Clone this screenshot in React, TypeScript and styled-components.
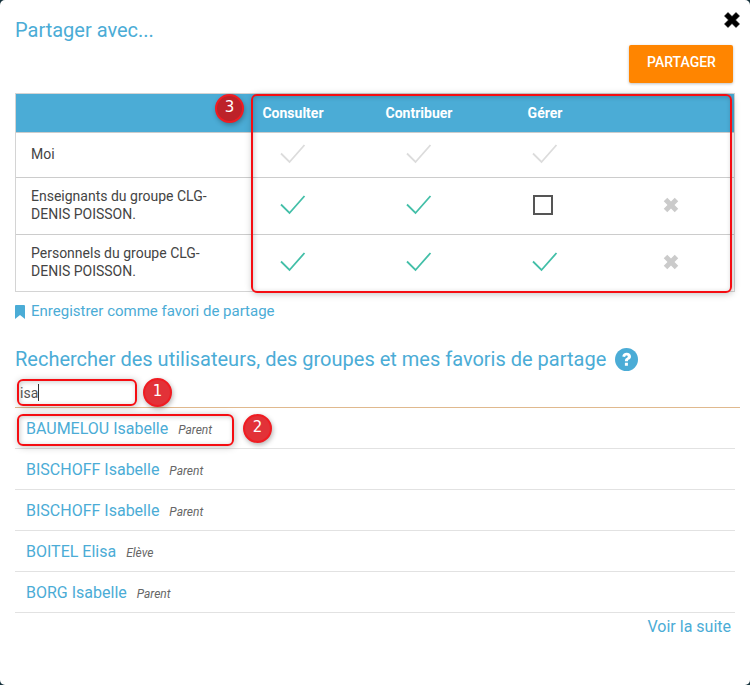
import React from "react";
import styled, { createGlobalStyle } from "styled-components";

const Global = createGlobalStyle`
  html, body { margin: 0; padding: 0; background: #16323c; }
  body { width: 750px; height: 685px; overflow: hidden; font-family: Roboto, "Liberation Sans", sans-serif; }
  * { box-sizing: border-box; }
`;

const BLUE = "#4bacd6";

const Modal = styled.div`
  position: relative;
  width: 750px;
  height: 685px;
  background: #fff;
  border-radius: 5px;
  padding: 19px 10px 0 15px;
`;
const Close = styled.button`
  position: absolute;
  top: 12px;
  right: 10px;
  width: 16px;
  height: 16px;
  padding: 0;
  border: 0;
  background: none;
  display: flex;
`;
const Title = styled.h2`
  margin: 0;
  font-size: 20px;
  line-height: 23px;
  font-weight: 400;
  color: ${BLUE};
`;
const Actions = styled.div`
  display: flex;
  justify-content: flex-end;
  padding-right: 7px;
  margin-top: 3px;
`;
const ShareButton = styled.button`
  width: 104px;
  height: 38px;
  border: 0;
  border-radius: 2px;
  background: #ff8500;
  color: #fff;
  font: 500 14px Roboto, sans-serif;
  padding: 0 0 4px 1px;
  box-shadow: 0 1px 3px rgba(0, 0, 0, 0.25);
`;
const Table = styled.div`
  width: 720px;
  margin-top: 10px;
  border: 1px solid #d4d4d4;
  display: grid;
  grid-template-columns: 214px repeat(4, 126px);
  grid-template-rows: 39px 45px 57px 56px;
`;
const HeadCell = styled.div`
  background: ${BLUE};
  color: #fff;
  font-size: 14px;
  font-weight: 700;
  display: flex;
  align-items: center;
  justify-content: center;
  padding: 0 0 1px;
  border-bottom: 1px solid #ccc;
`;
const LabelCell = styled.div<{ $last?: boolean }>`
  display: flex;
  align-items: center;
  padding: 0 15px 2px;
  font-size: 14px;
  line-height: 18px;
  color: #444;
  white-space: pre-line;
  border-bottom: ${(p) => (p.$last ? "0" : "1px solid #ccc")};
`;
const IconCell = styled.div<{ $last?: boolean; $shift?: number }>`
  display: flex;
  align-items: center;
  justify-content: center;
  padding: 0 ${(p) => (p.$shift ? 4 : 0)}px 2px 0;
  border-bottom: ${(p) => (p.$last ? "0" : "1px solid #ccc")};
`;
const FavLink = styled.a`
  display: flex;
  align-items: center;
  gap: 6px;
  margin-top: 11px;
  font-size: 15px;
  line-height: 17px;
  color: ${BLUE};
`;
const SearchTitle = styled.h2`
  display: flex;
  align-items: center;
  gap: 9px;
  margin: 26px 0 0;
  font-size: 20px;
  line-height: 26px;
  font-weight: 400;
  color: ${BLUE};
`;
const SearchBox = styled.div`
  height: 30px;
  margin-top: 6px;
  border-bottom: 1px solid #e0b98e;
  width: 725px;
  padding: 6px 0 0 5px;
  font-size: 14px;
  line-height: 18px;
  color: #555;
  display: flex;
  align-items: flex-start;
`;
const Caret = styled.span`
  width: 1px;
  height: 17px;
  background: #333;
`;
const List = styled.ul`
  list-style: none;
  margin: 0;
  padding: 0;
  width: 720px;
`;
const Row = styled.li`
  height: 41px;
  display: flex;
  align-items: center;
  padding: 0 0 0 11px;
  border-bottom: 1px solid #e2e2e2;
`;
const Name = styled.span`
  font-size: 16px;
  color: ${BLUE};
`;
const Role = styled.span`
  margin-left: 10px;
  font-size: 12px;
  font-style: italic;
  color: #666;
  padding-top: 4px;
`;
const More = styled.a`
  display: block;
  width: 716px;
  margin-top: 4px;
  text-align: right;
  font-size: 16px;
  line-height: 20px;
  color: ${BLUE};
`;
const Callout = styled.div<{ $x: number; $y: number; $w: number; $h: number }>`
  position: absolute;
  left: ${(p) => p.$x}px;
  top: ${(p) => p.$y}px;
  width: ${(p) => p.$w}px;
  height: ${(p) => p.$h}px;
  border: 2px solid #f50d12;
  border-radius: 6px;
  box-shadow: 1px 1px 7px rgba(0, 0, 0, 0.25), inset 1px 1px 5px rgba(0, 0, 0, 0.2);
  pointer-events: none;
`;
const Badge = styled.div<{ $x: number; $y: number; $dark?: boolean }>`
  position: absolute;
  left: ${(p) => p.$x}px;
  top: ${(p) => p.$y}px;
  width: 29px;
  height: 29px;
  border-radius: 50%;
  background: ${(p) => (p.$dark ? "#bd2229" : "#e23238")};
  border: 2px solid #f01c22;
  color: #fff;
  font: 400 15px/23px "DejaVu Sans", sans-serif;
  text-align: center;
  box-shadow: 1px 2px 5px rgba(0, 0, 0, 0.3);
`;

const Check = ({ color }: { color: string }) => (
  <svg width="26" height="20" viewBox="0 0 26 20" fill="none">
    <path d="M1 9.5 L9.5 18 L24.5 1" stroke={color} strokeWidth="1.8" />
  </svg>
);
const Cross = () => (
  <svg width="16" height="16" viewBox="0 0 15 15">
    <path
      d="M4 .7 7.5 4.2 11 .7 14.3 4 10.8 7.5 14.3 11 11 14.3 7.5 10.8 4 14.3 .7 11 4.2 7.5 .7 4Z"
      fill="#cbcbcb"
    />
  </svg>
);
const Square = () => (
  <svg width="20" height="20" viewBox="0 0 20 20" fill="none">
    <rect x="1" y="1" width="18" height="18" stroke="#555" strokeWidth="2" />
  </svg>
);

const GREEN = "#43bfa8";
const GREY = "#dcdcdc";

const rows = [
  { label: "Moi", icons: ["grey", "grey", "grey", ""] },
  { label: "Enseignants du groupe CLG-\nDENIS POISSON.", icons: ["green", "green", "box", "x"] },
  { label: "Personnels du groupe CLG-\nDENIS POISSON.", icons: ["green", "green", "green", "x"] },
];

const renderIcon = (k: string) => {
  if (k === "grey") return <Check color={GREY} />;
  if (k === "green") return <Check color={GREEN} />;
  if (k === "box") return <Square />;
  if (k === "x") return <Cross />;
  return null;
};

const people = [
  ["BAUMELOU Isabelle", "Parent"],
  ["BISCHOFF Isabelle", "Parent"],
  ["BISCHOFF Isabelle", "Parent"],
  ["BOITEL Elisa", "Elève"],
  ["BORG Isabelle", "Parent"],
];

export default function App() {
  return (
    <Modal>
      <Global />
      <Close aria-label="Fermer">
        <svg width="16" height="16" viewBox="1 1 16 16">
          <path d="M5 1.5 9 5.5 13 1.5 16.5 5 12.5 9 16.5 13 13 16.5 9 12.5 5 16.5 1.5 13 5.5 9 1.5 5Z" fill="#000" stroke="#000" strokeWidth="0.6" />
        </svg>
      </Close>
      <Title>Partager avec...</Title>
      <Actions>
        <ShareButton>PARTAGER</ShareButton>
      </Actions>
      <Table>
        <HeadCell />
        <HeadCell>Consulter</HeadCell>
        <HeadCell>Contribuer</HeadCell>
        <HeadCell>Gérer</HeadCell>
        <HeadCell />
        {rows.map((r, i) => (
          <React.Fragment key={i}>
            <LabelCell $last={i === 2}>{r.label}</LabelCell>
            {r.icons.map((k, j) => (
              <IconCell key={j} $last={i === 2} $shift={k === "box" ? 1 : 0}>{renderIcon(k)}</IconCell>
            ))}
          </React.Fragment>
        ))}
      </Table>
      <FavLink>
        <svg width="10" height="14" viewBox="0 0 10 14">
          <path d="M0 1a1 1 0 0 1 1-1h8a1 1 0 0 1 1 1v13L5 10 0 14Z" fill={BLUE} />
        </svg>
        Enregistrer comme favori de partage
      </FavLink>
      <SearchTitle>
        Rechercher des utilisateurs, des groupes et mes favoris de partage
        <svg width="23" height="23" viewBox="0 0 23 23">
          <circle cx="11.5" cy="11.5" r="11.5" fill={BLUE} />
          <path d="M7.3 8.6c.2-2.4 2-3.8 4.4-3.8 2.5 0 4.3 1.5 4.3 3.6 0 1.8-1 2.5-2.1 3.2-.7.5-1 .8-1 1.7H9.9c0-1.7.5-2.4 1.6-3.2.8-.5 1.3-.9 1.3-1.5 0-.7-.5-1.1-1.2-1.1-.8 0-1.3.5-1.4 1.4ZM9.9 14.8h3v3h-3Z" fill="#fff" />
        </svg>
      </SearchTitle>
      <SearchBox>isa<Caret /></SearchBox>
      <List>
        {people.map(([n, r], i) => (
          <Row key={i}>
            <Name>{n}</Name>
            <Role>{r}</Role>
          </Row>
        ))}
      </List>
      <More>Voir la suite</More>

      <Callout $x={251} $y={94} $w={481} $h={199} />
      <Callout $x={17} $y={379} $w={120} $h={27} />
      <Callout $x={17} $y={414} $w={217} $h={32} />
      <Badge $x={215} $y={94} $dark>3</Badge>
      <Badge $x={143} $y={378}>1</Badge>
      <Badge $x={243} $y={414}>2</Badge>
    </Modal>
  );
}
